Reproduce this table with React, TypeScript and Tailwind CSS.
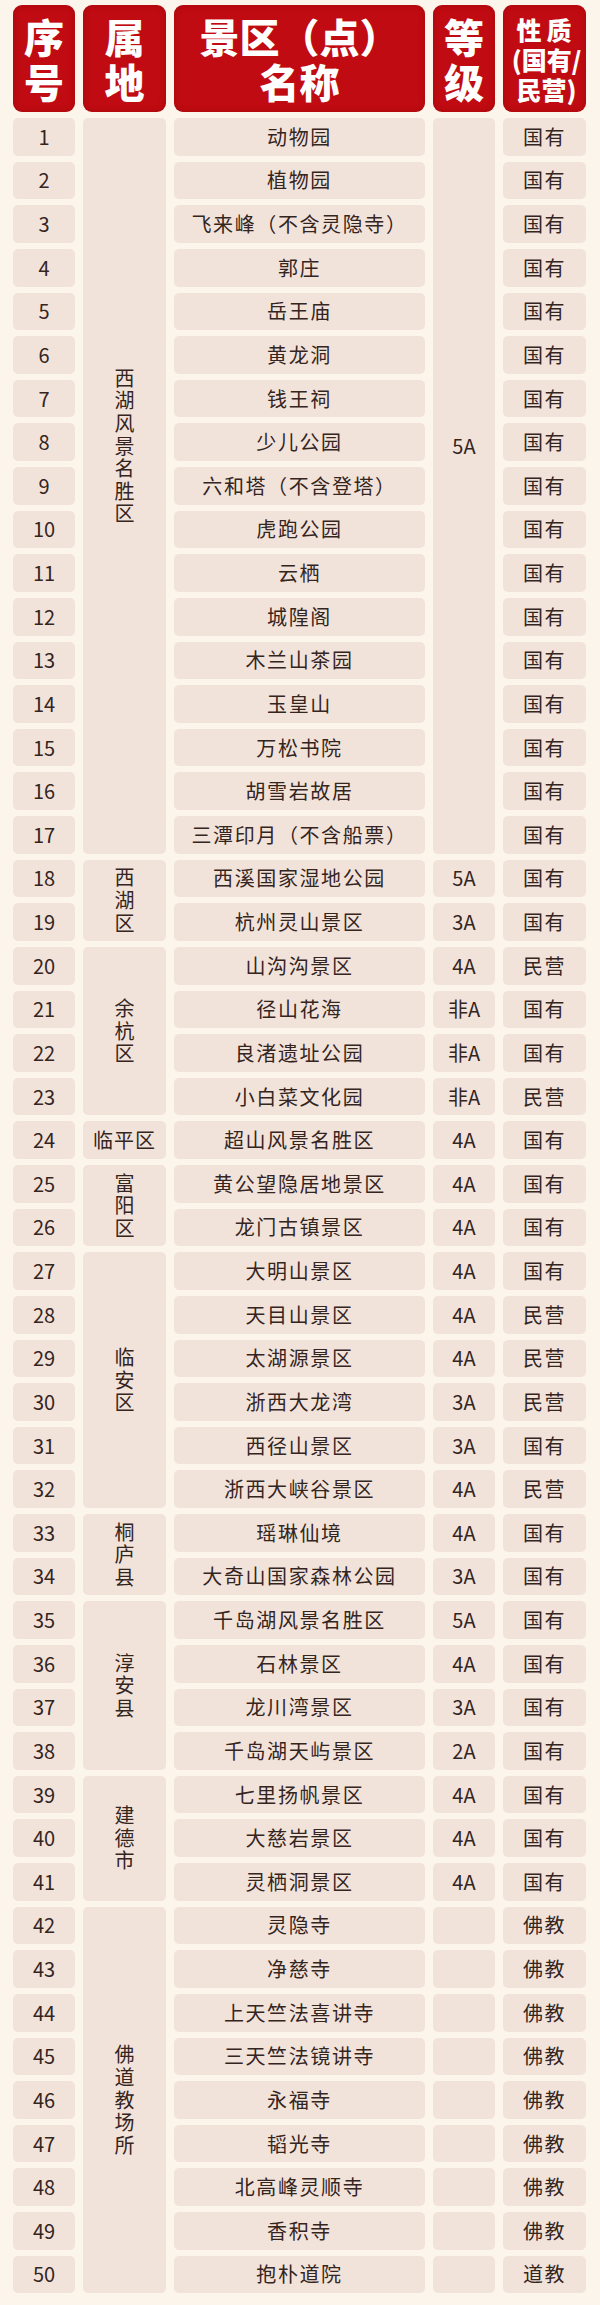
import type { ReactNode } from 'react';

type Row = { no: number; name: string; grade: string; nature: string };

const rows: Row[] = [
  { no: 1, name: '动物园', grade: '5A', nature: '国有' },
  { no: 2, name: '植物园', grade: '5A', nature: '国有' },
  { no: 3, name: '飞来峰（不含灵隐寺）', grade: '5A', nature: '国有' },
  { no: 4, name: '郭庄', grade: '5A', nature: '国有' },
  { no: 5, name: '岳王庙', grade: '5A', nature: '国有' },
  { no: 6, name: '黄龙洞', grade: '5A', nature: '国有' },
  { no: 7, name: '钱王祠', grade: '5A', nature: '国有' },
  { no: 8, name: '少儿公园', grade: '5A', nature: '国有' },
  { no: 9, name: '六和塔（不含登塔）', grade: '5A', nature: '国有' },
  { no: 10, name: '虎跑公园', grade: '5A', nature: '国有' },
  { no: 11, name: '云栖', grade: '5A', nature: '国有' },
  { no: 12, name: '城隍阁', grade: '5A', nature: '国有' },
  { no: 13, name: '木兰山茶园', grade: '5A', nature: '国有' },
  { no: 14, name: '玉皇山', grade: '5A', nature: '国有' },
  { no: 15, name: '万松书院', grade: '5A', nature: '国有' },
  { no: 16, name: '胡雪岩故居', grade: '5A', nature: '国有' },
  { no: 17, name: '三潭印月（不含船票）', grade: '5A', nature: '国有' },
  { no: 18, name: '西溪国家湿地公园', grade: '5A', nature: '国有' },
  { no: 19, name: '杭州灵山景区', grade: '3A', nature: '国有' },
  { no: 20, name: '山沟沟景区', grade: '4A', nature: '民营' },
  { no: 21, name: '径山花海', grade: '非A', nature: '国有' },
  { no: 22, name: '良渚遗址公园', grade: '非A', nature: '国有' },
  { no: 23, name: '小白菜文化园', grade: '非A', nature: '民营' },
  { no: 24, name: '超山风景名胜区', grade: '4A', nature: '国有' },
  { no: 25, name: '黄公望隐居地景区', grade: '4A', nature: '国有' },
  { no: 26, name: '龙门古镇景区', grade: '4A', nature: '国有' },
  { no: 27, name: '大明山景区', grade: '4A', nature: '国有' },
  { no: 28, name: '天目山景区', grade: '4A', nature: '民营' },
  { no: 29, name: '太湖源景区', grade: '4A', nature: '民营' },
  { no: 30, name: '浙西大龙湾', grade: '3A', nature: '民营' },
  { no: 31, name: '西径山景区', grade: '3A', nature: '国有' },
  { no: 32, name: '浙西大峡谷景区', grade: '4A', nature: '民营' },
  { no: 33, name: '瑶琳仙境', grade: '4A', nature: '国有' },
  { no: 34, name: '大奇山国家森林公园', grade: '3A', nature: '国有' },
  { no: 35, name: '千岛湖风景名胜区', grade: '5A', nature: '国有' },
  { no: 36, name: '石林景区', grade: '4A', nature: '国有' },
  { no: 37, name: '龙川湾景区', grade: '3A', nature: '国有' },
  { no: 38, name: '千岛湖天屿景区', grade: '2A', nature: '国有' },
  { no: 39, name: '七里扬帆景区', grade: '4A', nature: '国有' },
  { no: 40, name: '大慈岩景区', grade: '4A', nature: '国有' },
  { no: 41, name: '灵栖洞景区', grade: '4A', nature: '国有' },
  { no: 42, name: '灵隐寺', grade: '', nature: '佛教' },
  { no: 43, name: '净慈寺', grade: '', nature: '佛教' },
  { no: 44, name: '上天竺法喜讲寺', grade: '', nature: '佛教' },
  { no: 45, name: '三天竺法镜讲寺', grade: '', nature: '佛教' },
  { no: 46, name: '永福寺', grade: '', nature: '佛教' },
  { no: 47, name: '韬光寺', grade: '', nature: '佛教' },
  { no: 48, name: '北高峰灵顺寺', grade: '', nature: '佛教' },
  { no: 49, name: '香积寺', grade: '', nature: '佛教' },
  { no: 50, name: '抱朴道院', grade: '', nature: '道教' },
];

// 属地 merged cells: first row number, how many rows, label
const areas = [
  { start: 1, len: 17, label: '西湖风景名胜区', vertical: true },
  { start: 18, len: 2, label: '西湖区', vertical: true },
  { start: 20, len: 4, label: '余杭区', vertical: true },
  { start: 24, len: 1, label: '临平区', vertical: false },
  { start: 25, len: 2, label: '富阳区', vertical: true },
  { start: 27, len: 6, label: '临安区', vertical: true },
  { start: 33, len: 2, label: '桐庐县', vertical: true },
  { start: 35, len: 4, label: '淳安县', vertical: true },
  { start: 39, len: 3, label: '建德市', vertical: true },
  { start: 42, len: 9, label: '佛道教场所', vertical: true },
];

const spanCls: Record<number, string> = {
  1: '',
  2: 'row-span-2',
  3: 'row-span-3',
  4: 'row-span-4',
  6: 'row-span-6',
  9: 'row-span-9',
  17: 'row-span-17',
};

const cell = 'flex items-center justify-center rounded-[5px] bg-[#f2e3da]';
const head =
  'flex items-center justify-center rounded-[9px] bg-[#bf0b11] text-white font-black shadow-[inset_0_0_6px_rgba(120,0,0,0.35)]';

function Stack({ text }: { text: string }) {
  return (
    <div className="flex flex-col items-center leading-[22.6px]">
      {text.split('').map((ch, i) => (
        <span key={i}>{ch}</span>
      ))}
    </div>
  );
}

export default function App() {
  const cells: ReactNode[] = [];

  rows.forEach((r) => {
    cells.push(
      <div key={`no-${r.no}`} className={`${cell} col-start-1`}>
        {r.no}
      </div>,
    );

    const area = areas.find((a) => a.start === r.no);
    if (area) {
      const lift = area.len === 17 ? 'pb-[80px]' : '';
      cells.push(
        <div key={`area-${r.no}`} className={`${cell} col-start-2 ${spanCls[area.len]} ${lift}`}>
          {area.vertical ? <Stack text={area.label} /> : <span className="tracking-[1px]">{area.label}</span>}
        </div>,
      );
    }

    cells.push(
      <div key={`name-${r.no}`} className={`${cell} col-start-3 tracking-[1.6px] whitespace-nowrap`}>
        {r.name}
      </div>,
    );

    if (r.no === 1) {
      cells.push(
        <div key="grade-1" className={`${cell} col-start-4 row-span-17 pb-[80px]`}>
          5A
        </div>,
      );
    } else if (r.no > 17) {
      cells.push(
        <div key={`grade-${r.no}`} className={`${cell} col-start-4`}>
          {r.grade}
        </div>,
      );
    }

    cells.push(
      <div key={`nat-${r.no}`} className={`${cell} col-start-5 tracking-[1.6px]`}>
        {r.nature}
      </div>,
    );
  });

  return (
    <div className="min-h-[2305px] bg-[#fcf5eb] pt-[5px] pl-[13px] font-['Noto_Sans_CJK_SC',sans-serif] text-[20px] text-[#34251f]">
      <div className="grid grid-cols-[62px_83px_251px_62px_83px] grid-rows-[107px_repeat(50,37.63px)] gap-x-[8px] gap-y-[6px]">
        <div className={`${head} col-start-1 text-[40px] leading-[45px]`}>
          <div className="flex flex-col items-center">
            <span>序</span>
            <span>号</span>
          </div>
        </div>
        <div className={`${head} col-start-2 text-[40px] leading-[45px]`}>
          <div className="flex flex-col items-center">
            <span>属</span>
            <span>地</span>
          </div>
        </div>
        <div className={`${head} col-start-3 text-[40px] leading-[45px]`}>
          <div className="flex flex-col items-center">
            <span>景区（点）</span>
            <span>名称</span>
          </div>
        </div>
        <div className={`${head} col-start-4 text-[40px] leading-[45px]`}>
          <div className="flex flex-col items-center">
            <span>等</span>
            <span>级</span>
          </div>
        </div>
        <div className={`${head} col-start-5 text-[25px] leading-[30px]`}>
          <div className="flex flex-col items-center whitespace-nowrap pl-[4px]">
            <span className="tracking-[5px]">性质</span>
            <span>(国有/</span>
            <span>民营)</span>
          </div>
        </div>
        {cells}
      </div>
    </div>
  );
}
